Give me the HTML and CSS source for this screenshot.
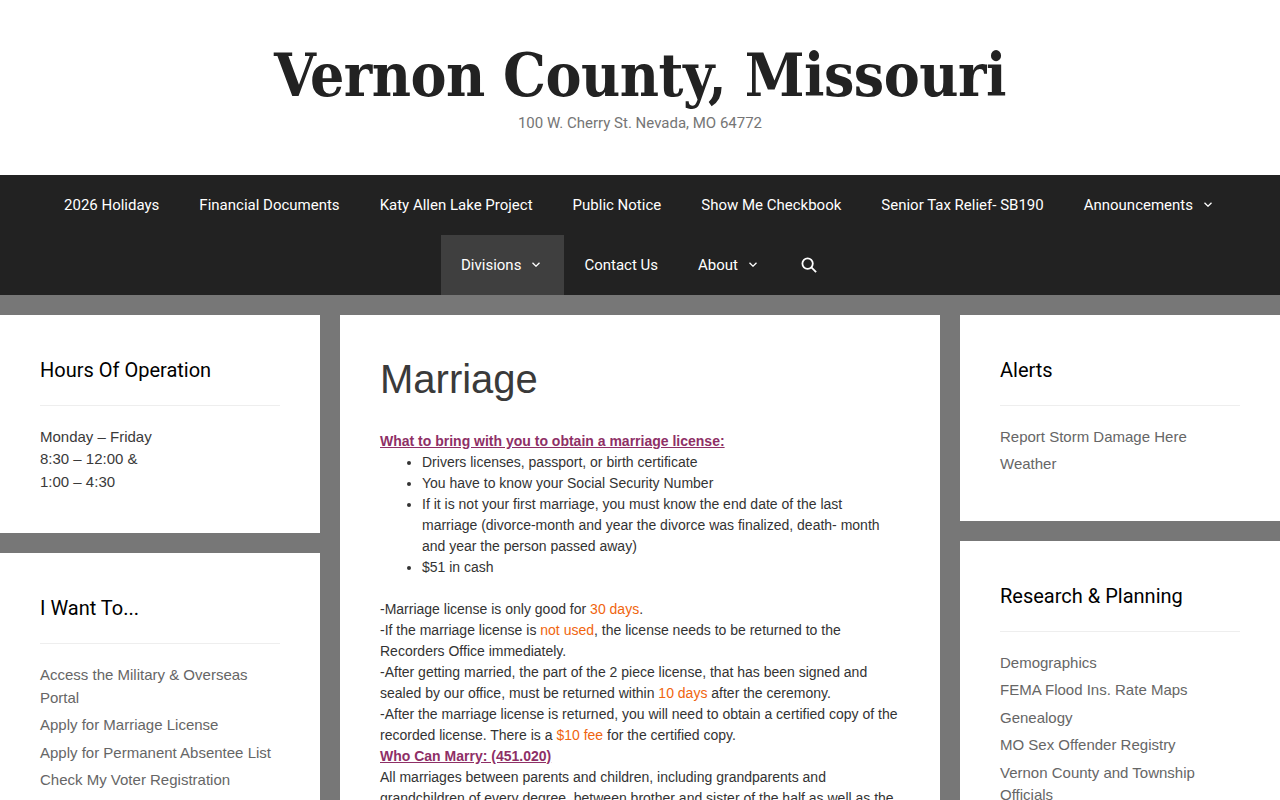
FILE: index.html
```html
<!DOCTYPE html>
<html lang="en">
<head>
<meta charset="utf-8">
<title>Marriage - Vernon County, Missouri</title>
<link rel="stylesheet" href="styles.css">
</head>
<body>
<header class="site-header">
  <p class="site-title">Vernon County, Missouri</p>
  <p class="site-desc">100 W. Cherry St. Nevada, MO 64772</p>
</header>
<nav class="main-nav">
  <a class="nav-item" href="#">2026 Holidays</a>
  <a class="nav-item" href="#">Financial Documents</a>
  <a class="nav-item" href="#">Katy Allen Lake Project</a>
  <a class="nav-item" href="#">Public Notice</a>
  <a class="nav-item" href="#">Show Me Checkbook</a>
  <a class="nav-item" href="#">Senior Tax Relief- SB190</a>
  <a class="nav-item" href="#">Announcements<svg class="caret" viewBox="0 0 8 5"><path d="M.5.7L4 4.2 7.5.7"/></svg></a>
  <a class="nav-item current" href="#">Divisions<svg class="caret" viewBox="0 0 8 5"><path d="M.5.7L4 4.2 7.5.7"/></svg></a>
  <a class="nav-item" href="#">Contact Us</a>
  <a class="nav-item" href="#">About<svg class="caret" viewBox="0 0 8 5"><path d="M.5.7L4 4.2 7.5.7"/></svg></a>
  <a class="nav-item nav-search" href="#" aria-label="Search"><svg class="search" viewBox="0 0 16 16"><circle cx="6.6" cy="6.6" r="5.2"/><path d="M10.4 10.4l4.7 4.7"/></svg></a>
</nav>
<div class="page">
  <aside class="side">
    <section class="widget">
      <h2 class="widget-title">Hours Of Operation</h2>
      <p class="plain">Monday – Friday<br>8:30 – 12:00 &amp;<br>1:00 – 4:30</p>
    </section>
    <section class="widget">
      <h2 class="widget-title">I Want To...</h2>
      <ul class="links">
        <li><a href="#">Access the Military &amp; Overseas Portal</a></li>
        <li><a href="#">Apply for Marriage License</a></li>
        <li><a href="#">Apply for Permanent Absentee List</a></li>
        <li><a href="#">Check My Voter Registration</a></li>
      </ul>
    </section>
  </aside>
  <main class="content">
    <h1 class="entry-title">Marriage</h1>
    <p class="lead"><a class="sub" href="#">What to bring with you to obtain a marriage license:</a></p>
    <ul class="bring">
      <li>Drivers licenses, passport, or birth certificate</li>
      <li>You have to know your Social Security Number</li>
      <li>If it is not your first marriage, you must know the end date of the last marriage (divorce-month and year the divorce was finalized, death- month and year the person passed away)</li>
      <li>$51 in cash</li>
    </ul>
    <p class="rules">-Marriage license is only good for <span class="hot">30 days</span>.<br>
    -If the marriage license is <span class="hot">not used</span>, the license needs to be returned to the Recorders Office immediately.<br>
    -After getting married, the part of the 2 piece license, that has been signed and sealed by our office, must be returned within <span class="hot">10 days</span> after the ceremony.<br>
    -After the marriage license is returned, you will need to obtain a certified copy of the recorded license. There is a <span class="hot">$10 fee</span> for the certified copy.<br>
    <a class="sub" href="#">Who Can Marry: (451.020)</a><br>
    All marriages between parents and children, including grandparents and grandchildren of every degree, between brother and sister of the half as well as the</p>
  </main>
  <aside class="side">
    <section class="widget">
      <h2 class="widget-title">Alerts</h2>
      <ul class="links">
        <li><a href="#">Report Storm Damage Here</a></li>
        <li><a href="#">Weather</a></li>
      </ul>
    </section>
    <section class="widget">
      <h2 class="widget-title">Research &amp; Planning</h2>
      <ul class="links">
        <li><a href="#">Demographics</a></li>
        <li><a href="#">FEMA Flood Ins. Rate Maps</a></li>
        <li><a href="#">Genealogy</a></li>
        <li><a href="#">MO Sex Offender Registry</a></li>
        <li><a href="#">Vernon County and Township Officials</a></li>
      </ul>
    </section>
  </aside>
</div>
</body>
</html>
```
FILE: styles.css
```css
* { box-sizing: border-box; }
html, body { margin: 0; height: 800px; overflow: hidden; }
body { background: #777; font-family: "Liberation Sans", Arial, sans-serif; color: #3a3a3a; }
p, ul, h1, h2 { margin: 0; }
a { text-decoration: none; color: inherit; }

.site-header { background: #fff; height: 174.8px; padding-top: 40px; text-align: center; }
.site-title { font-family: "DejaVu Serif Condensed", "DejaVu Serif", serif; font-weight: 700; font-size: 60px; letter-spacing: -0.5px; line-height: 70px; color: #222; }
.site-desc { font-family: Roboto, sans-serif; font-size: 15px; line-height: 26px; color: #757575; }

.main-nav { background: #222; display: flex; flex-wrap: wrap; justify-content: center; padding: 0 40px; }
.nav-item { display: flex; align-items: center; height: 60px; padding: 0 20px; font-family: Roboto, sans-serif; font-weight: 400; font-size: 15px; color: #fff; }
.nav-item.current { background: #3f3f3f; }
.nav-item.nav-search { padding-right: 22px; }
.caret { width: 8px; height: 5px; margin-left: 11px; margin-right: 4px; fill: none; stroke: #fff; stroke-width: 1.3; }
.search { width: 16px; height: 16px; fill: none; stroke: #fff; stroke-width: 1.8; }

.page { display: grid; grid-template-columns: 320px 600px 320px; column-gap: 20px; padding-top: 20px; align-items: start; }
.side { display: flex; flex-direction: column; gap: 20px; }
.widget { background: #fff; padding: 40px; }
.widget-title { font-family: Roboto, sans-serif; font-weight: 400; font-size: 20px; line-height: 30px; color: #000; padding-bottom: 20px; margin-bottom: 20px; border-bottom: 1px solid #eee; }
.plain { font-size: 15px; line-height: 22.5px; color: #3a3a3a; }
.links { list-style: none; padding: 0; font-size: 15px; line-height: 22.5px; color: #666; }
.links li { margin-bottom: 5px; }

.content { background: #fff; padding: 40px; min-height: 485px; font-size: 14px; line-height: 21px; color: #333; }
.entry-title { font-weight: 400; font-size: 40px; line-height: 48px; color: #3a3a3a; margin-bottom: 28px; }
.sub { color: #8e2f66; font-weight: 700; text-decoration: underline; }
.bring { padding-left: 42px; margin-bottom: 21px; }
.hot { color: #f0650e; }
```
